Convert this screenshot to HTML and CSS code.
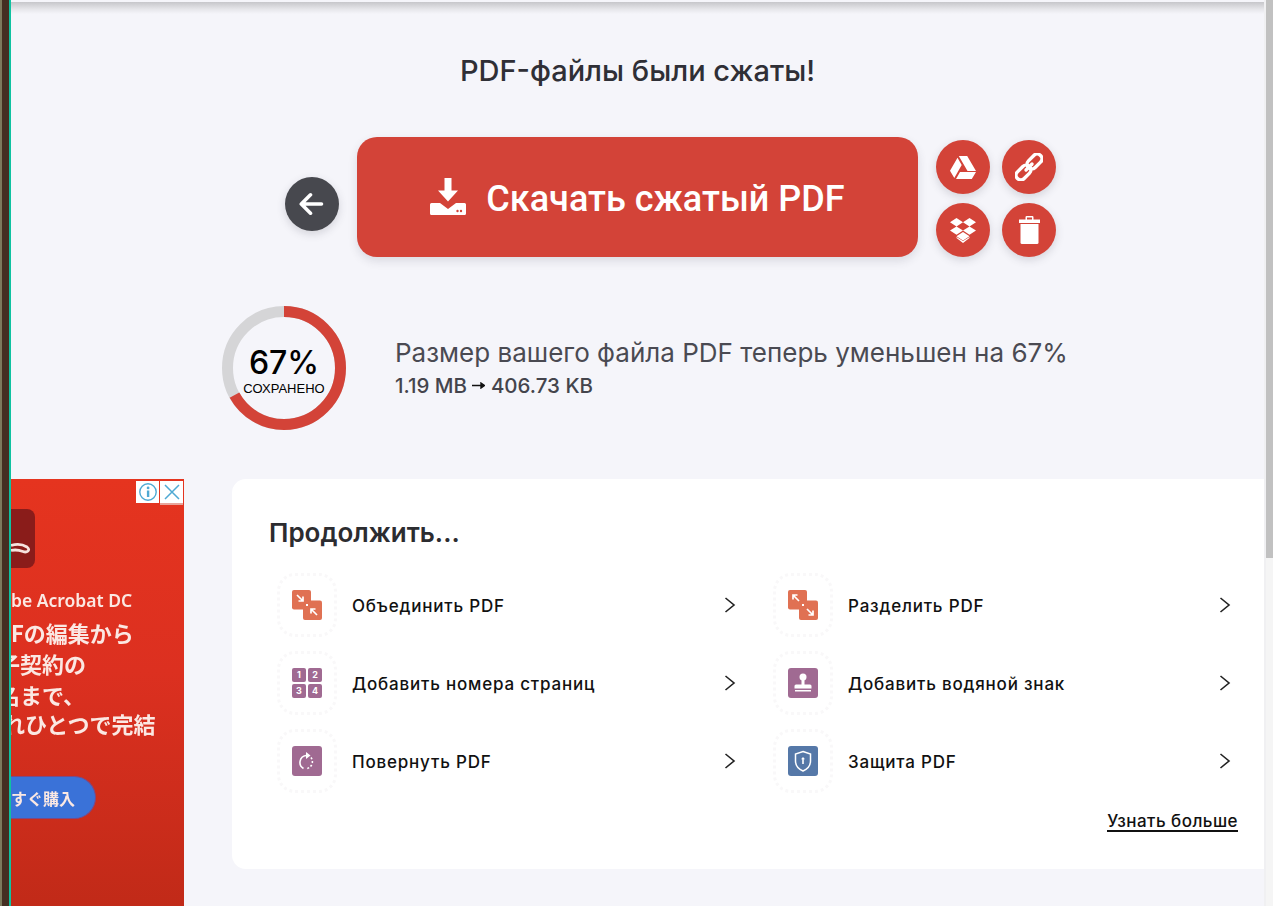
FILE: index.html
```html
<!DOCTYPE html>
<html lang="ru">
<head>
    <meta charset="UTF-8">
    <title>PDF-файлы были сжаты!</title>
    <link rel="stylesheet" href="styles.css">
</head>
<body>
    <div class="edge"><div class="edge-olive"></div><div class="edge-brown"></div><div class="edge-teal"></div></div>

    <div class="page">
        <div class="top-shadow"></div>
        <h1 class="title">PDF-файлы были сжаты!</h1>

        <div class="actions">
            <a class="round round-dark back-btn" href="#back">
                <svg width="26" height="26" viewBox="1 0 26 26"><path d="M23.5 13H3.5M12.5 3.8L3.3 13l9.2 9.2" fill="none" stroke="#fff" stroke-width="3.6" stroke-linecap="round" stroke-linejoin="round"/></svg>
            </a>
            <a class="download-btn" href="#download">
                <svg width="36" height="37" viewBox="0 0 36 37"><path d="M14.5 0h7v12.500h6.500L18 23.500 8 12.500h6.500z" fill="#fff"/><path d="M1.500 25h8.500l8 6 8-6h8.500q1.500 0 1.500 1.500v9q0 1.500-1.500 1.500h-33q-1.500 0-1.500-1.500v-9q0-1.500 1.500-1.500z" fill="#fff"/><circle cx="27.500" cy="33" r="1.200" fill="#d34338"/><circle cx="31" cy="33" r="1.200" fill="#d34338"/></svg>
                <span class="download-label">Скачать сжатый PDF</span>
            </a>
            <div class="round-grid">
                <a class="round" href="#drive">
                    <svg width="26" height="23" viewBox="0 0 26 23"><path d="M8.800 0h8.400l8.800 15h-8.500zM7.500 1.800l4.200 7.300L4.300 22 0 14.800zM10 16h16l-4.200 7H6z" fill="#fff"/></svg>
                </a>
                <a class="round" href="#link">
                    <svg width="28" height="28" viewBox="0 0 28 28"><g fill="none" stroke="#fff" stroke-width="3.400"><rect x="11" y="3.750" width="17" height="9.500" rx="4.700" transform="rotate(-45 19.500 8.500)"/><rect x="0" y="14.750" width="17" height="9.500" rx="4.700" transform="rotate(-45 8.500 19.500)"/><path d="M11 17l6-6" stroke-linecap="round"/></g></svg>
                </a>
                <a class="round" href="#dropbox">
                    <svg width="28" height="25" viewBox="0 0 26 25"><path d="M6.500 0L13 4.200 6.500 8.400 0 4.200zM19.500 0L26 4.200l-6.500 4.200L13 4.200zM0 12.600l6.500-4.200 6.500 4.200-6.500 4.200zM19.500 8.400l6.500 4.200-6.500 4.200-6.500-4.200zM6.500 18.200L13 14l6.500 4.200-6.500 4.200z" fill="#fff"/><path d="M6.500 20l6.500 5 6.500-5v-1l-6.500 4-6.500-4z" fill="#fff"/></svg>
                </a>
                <a class="round" href="#delete">
                    <svg width="21" height="28" viewBox="0 0 21 28"><path d="M0 3.500h6.500V1.200Q6.500 0 7.700 0h5.600q1.200 0 1.200 1.200v2.300H21V7H0zM8 3.500h5V1.500H8z" fill="#fff" fill-rule="evenodd"/><path d="M1.500 8h18v18.500q0 1.500-1.500 1.500H3q-1.500 0-1.500-1.500z" fill="#fff"/></svg>
                </a>
            </div>
        </div>

        <div class="result">
            <div class="ring">
                <svg width="124" height="124" viewBox="0 0 124 124">
                    <circle cx="62" cy="62" r="56.500" fill="none" stroke="#d5d5d7" stroke-width="11"/>
                    <circle cx="62" cy="62" r="56.500" fill="none" stroke="#d34338" stroke-width="11" pathLength="100" stroke-dasharray="67 100" transform="rotate(-90 62 62)"/>
                </svg>
                <div class="ring-label">
                    <div class="ring-percent">67%</div>
                    <div class="ring-saved">СОХРАНЕНО</div>
                </div>
            </div>
            <div class="result-text">
                <div class="result-main">Размер вашего файла PDF теперь уменьшен на 67%</div>
                <div class="result-size">1.19 MB
                    <svg class="size-arrow" width="13" height="7" viewBox="0 0 13 7"><path d="M0 3.500h10M9 1l3.500 2.500L9 6z" stroke="#111" stroke-width="1.400" fill="#111"/></svg>
                    406.73 KB</div>
            </div>
        </div>

        <div class="bottom">
            <aside class="ad">
                <div class="ad-close">
                    <span class="ad-box">
                        <svg width="20" height="20" viewBox="0 0 20 20"><circle cx="10" cy="10" r="8.200" fill="none" stroke="#4fa9d3" stroke-width="1.400"/><rect x="8.900" y="8.500" width="2.400" height="6.500" fill="#4fa9d3"/><circle cx="10.100" cy="5.900" r="1.400" fill="#4fa9d3"/></svg>
                    </span>
                    <span class="ad-box ad-box-close">
                        <svg width="18" height="18" viewBox="0 0 18 18"><path d="M2 2l14 14M16 2L2 16" stroke="#4fa9d3" stroke-width="1.500" fill="none"/></svg>
                    </span>
                </div>
                <div class="ad-logo">
                    <svg width="20" height="12" viewBox="0 0 20 12"><path d="M0 3.500C6 1.500 12 2.500 16 5 20 8 16 11 12 9.500 8 8 4 7.500 0 8.500" fill="none" stroke="#f6e3df" stroke-width="2.800"/></svg>
                </div>
                <div class="ad-text">
                    <div class="ad-brand">be Acrobat DC</div>
                    <div class="ad-line ad-line-one">Fの編集から</div>
                    <div class="ad-line ad-line-two">子契約の</div>
                    <div class="ad-line ad-line-three">名まで、</div>
                    <div class="ad-line ad-line-four">れひとつで完結</div>
                </div>
                <div class="ad-buy"><span>すぐ購入</span></div>
            </aside>

            <section class="next-card">
                <h2 class="next-title">Продолжить...</h2>
                <div class="next-grid">
                    <a class="next-item" href="#merge">
                        <span class="tool-frame">
                            <svg width="30" height="30" viewBox="0 0 30 30"><rect width="19" height="19.500" rx="2" fill="#e07153"/><rect x="11" y="10.500" width="19" height="19.500" rx="2" fill="#e07153"/><path d="M5 5l6 6M11 6.500V11H6.500M25 25l-6-6M19 23.500V19h4.500" fill="none" stroke="#fff" stroke-width="1.700"/><rect x="14" y="14" width="2" height="2" fill="#fff"/></svg>
                        </span>
                        <span class="tool-name">Объединить PDF</span>
                        <svg class="chev" width="12" height="18" viewBox="0 0 12 18"><path d="M1.500 2l8.500 7-8.500 7" fill="none" stroke="#222" stroke-width="1.600"/></svg>
                    </a>
                    <a class="next-item" href="#split">
                        <span class="tool-frame">
                            <svg width="30" height="30" viewBox="0 0 30 30"><rect width="19" height="19.500" rx="2" fill="#e07153"/><rect x="11" y="10.500" width="19" height="19.500" rx="2" fill="#e07153"/><path d="M11 11L5 5M5 9.500V5h4.500M19 19l6 6M25 20.500V25h-4.500" fill="none" stroke="#fff" stroke-width="1.700"/><rect x="14" y="14" width="2" height="2" fill="#fff"/></svg>
                        </span>
                        <span class="tool-name">Разделить PDF</span>
                        <svg class="chev" width="12" height="18" viewBox="0 0 12 18"><path d="M1.500 2l8.500 7-8.500 7" fill="none" stroke="#222" stroke-width="1.600"/></svg>
                    </a>
                    <a class="next-item" href="#numbers">
                        <span class="tool-frame">
                            <span class="number-grid"><b>1</b><b>2</b><b>3</b><b>4</b></span>
                        </span>
                        <span class="tool-name">Добавить номера страниц</span>
                        <svg class="chev" width="12" height="18" viewBox="0 0 12 18"><path d="M1.500 2l8.500 7-8.500 7" fill="none" stroke="#222" stroke-width="1.600"/></svg>
                    </a>
                    <a class="next-item" href="#watermark">
                        <span class="tool-frame">
                            <svg width="30" height="30" viewBox="0 0 30 30"><rect width="30" height="30" rx="3" fill="#a06a92"/><circle cx="15" cy="9" r="3.500" fill="#fff"/><path d="M13.500 11h3v5.500H22q1.500 0 1.500 1.500v2.500h-17V18q0-1.500 1.500-1.500h5.500z" fill="#fff"/><rect x="7" y="22" width="16" height="1.500" fill="#fff"/></svg>
                        </span>
                        <span class="tool-name">Добавить водяной знак</span>
                        <svg class="chev" width="12" height="18" viewBox="0 0 12 18"><path d="M1.500 2l8.500 7-8.500 7" fill="none" stroke="#222" stroke-width="1.600"/></svg>
                    </a>
                    <a class="next-item" href="#rotate">
                        <span class="tool-frame">
                            <svg width="30" height="30" viewBox="0 0 30 30"><rect width="30" height="30" rx="3" fill="#a06a92"/><path d="M14 9.500a7 7 0 0 0-2.500 13" fill="none" stroke="#fff" stroke-width="1.600"/><path d="M14 6l4.500 3.500L14 13z" fill="#fff"/><path d="M19 11.500a7 7 0 0 1-4 11" fill="none" stroke="#fff" stroke-width="1.600" stroke-dasharray="2 1.800"/></svg>
                        </span>
                        <span class="tool-name">Повернуть PDF</span>
                        <svg class="chev" width="12" height="18" viewBox="0 0 12 18"><path d="M1.500 2l8.500 7-8.500 7" fill="none" stroke="#222" stroke-width="1.600"/></svg>
                    </a>
                    <a class="next-item" href="#protect">
                        <span class="tool-frame">
                            <svg width="30" height="30" viewBox="0 0 30 30"><rect width="30" height="30" rx="3" fill="#5578a8"/><path d="M15 5.500l7.500 2.500v7c0 4.800-3 8-7.500 10-4.500-2-7.500-5.200-7.500-10V8z" fill="none" stroke="#fff" stroke-width="1.500"/><path d="M15 11l2 2.200h-1.200V18h-1.600v-4.800H13z" fill="#fff"/></svg>
                        </span>
                        <span class="tool-name">Защита PDF</span>
                        <svg class="chev" width="12" height="18" viewBox="0 0 12 18"><path d="M1.500 2l8.500 7-8.500 7" fill="none" stroke="#222" stroke-width="1.600"/></svg>
                    </a>
                </div>
                <div class="more-row"><a class="more-link" href="#more">Узнать больше</a></div>
            </section>
        </div>
    </div>

    <div class="scrollbar"><div class="scroll-thumb"></div></div>
</body>
</html>
```

FILE: styles.css
```css
* {
    margin: 0;
    padding: 0;
    box-sizing: border-box;
}

html, body {
    height: 906px;
    overflow: hidden;
}

body {
    display: flex;
    background: #f5f5fa;
    color: #2f2f33;
    font-family: Inter, "Noto Sans", sans-serif;
}

a {
    color: inherit;
    text-decoration: none;
}

.edge {
    display: flex;
    flex: 0 0 11px;
}

.edge-olive {
    width: 2px;
    background: #7d7a5c;
}

.edge-brown {
    width: 7px;
    background: #452f22;
}

.edge-teal {
    width: 2px;
    background: #0fc2a0;
}

.page {
    flex: 1;
    min-width: 0;
}

.scrollbar {
    flex: 0 0 9px;
    padding-left: 2px;
    background: linear-gradient(90deg, #f0f0f2 0 2px, #f5f5f5 2px);
}

.scroll-thumb {
    height: 558px;
    background: #c1c1c1;
}

.top-shadow {
    height: 12px;
    margin-top: 2px;
    background: linear-gradient(180deg, #c6c6ca, #e6e6ea 60%, #f5f5fa);
}

.title {
    margin-top: 39px;
    text-align: center;
    font-size: 29px;
    line-height: 36px;
    font-weight: 500;
    color: #2f2f36;
}

.actions {
    display: flex;
    align-items: center;
    margin: 48px 0 0 274px;
}

.round {
    display: flex;
    align-items: center;
    justify-content: center;
    width: 54px;
    height: 54px;
    border-radius: 50%;
    background: #d34338;
    box-shadow: 0 3px 8px rgba(60, 60, 80, 0.18);
}

.round-dark {
    background: #47484e;
}

.back-btn {
    margin: 14px 18px 0 0;
}

.download-btn {
    display: flex;
    align-items: center;
    justify-content: center;
    gap: 20px;
    width: 561px;
    height: 120px;
    border-radius: 20px;
    background: #d34338;
    color: #fff;
    font-family: Roboto, sans-serif;
    font-size: 36px;
    font-weight: 500;
    box-shadow: 0 4px 10px rgba(60, 60, 80, 0.14);
}

.download-btn svg {
    margin-bottom: 2px;
}

.download-label {
    margin-top: 4px;
}

.round-grid {
    display: grid;
    grid-template-columns: 54px 54px;
    column-gap: 12px;
    row-gap: 9px;
    margin-left: 18px;
    padding-top: 3px;
}

.result {
    display: flex;
    align-items: center;
    margin: 49px 0 0 211px;
}

.ring {
    position: relative;
    width: 124px;
    height: 124px;
}

.ring-label {
    position: absolute;
    inset: 0;
    text-align: center;
    color: #000;
}

.ring-percent {
    margin-top: 39px;
    font-size: 32px;
    font-weight: 500;
    line-height: 36px;
}

.ring-saved {
    font-family: "Liberation Sans", sans-serif;
    font-size: 13px;
    line-height: 15px;
}

.result-text {
    margin-left: 49px;
    padding-bottom: 1px;
}

.result-main {
    font-size: 26px;
    line-height: 32px;
    color: #4a4a52;
}

.result-size {
    margin-top: 4px;
    font-size: 20.500px;
    line-height: 26px;
    font-weight: 500;
    color: #44444c;
}

.size-arrow {
    vertical-align: 4px;
}

.bottom {
    display: flex;
    align-items: flex-start;
    margin-top: 49px;
}

.ad {
    position: relative;
    flex: 0 0 173px;
    height: 427px;
    overflow: hidden;
    background: linear-gradient(180deg, #e5341f, #dc3020 45%, #c12a18);
    color: #fbe8e3;
    font-family: "Noto Sans CJK JP", sans-serif;
}

.ad-close {
    position: absolute;
    top: 2px;
    right: 1px;
    display: flex;
    gap: 1px;
}

.ad-box {
    display: flex;
    align-items: center;
    justify-content: center;
    width: 23px;
    height: 22px;
    background: #fff;
}

.ad-box-close {
    box-shadow: 0 2px 0 #e8a59b;
}

.ad-logo {
    display: flex;
    align-items: flex-start;
    width: 24px;
    height: 59px;
    margin-top: 30px;
    padding-top: 33px;
    border-radius: 0 8px 8px 0;
    background: #8a1c1a;
}

.ad-text {
    margin-top: 20px;
    filter: blur(0.5px);
    font-weight: 700;
    white-space: nowrap;
}

.ad-brand {
    font-family: "Noto Sans", sans-serif;
    font-size: 17.500px;
    font-weight: 600;
    line-height: 24px;
}

.ad-line {
    font-size: 22px;
    line-height: 29px;
}

.ad-line-one {
    margin-top: 6px;
}

.ad-line-two {
    margin: 2px 0 0 -13px;
}

.ad-line-three {
    margin: 2px 0 0 -13px;
}

.ad-line-four {
    margin-left: -8px;
}

.ad-buy {
    display: flex;
    align-items: center;
    width: 85px;
    height: 43px;
    margin-top: 38px;
    border-radius: 0 22px 22px 0;
    background: #3a72d8;
    border: 1px solid #7a4a88;
    border-left: 0;
    font-size: 16px;
    font-weight: 700;
    white-space: nowrap;
}

.ad-buy span {
    filter: blur(0.3px);
}

.next-card {
    flex: 1;
    height: 390px;
    margin-left: 48px;
    padding: 37px 0 0 37px;
    border-radius: 14px 0 0 14px;
    background: #fff;
}

.next-title {
    font-size: 26px;
    line-height: 34px;
    font-weight: 600;
    color: #2c2c30;
}

.next-grid {
    display: grid;
    grid-template-columns: 458px 457px;
    column-gap: 38px;
    grid-auto-rows: 78px;
    margin: 16px 0 0 9px;
}

.next-item {
    display: flex;
    align-items: center;
    color: #111;
}

.tool-frame {
    display: flex;
    align-items: center;
    justify-content: center;
    flex: none;
    width: 60px;
    height: 64px;
    margin: 0 -1px;
    border: 3px dotted #f9f8f9;
    border-radius: 18px;
}

.tool-name {
    flex: 1;
    margin-left: 16px;
    padding-top: 2px;
    font-size: 17px;
    font-weight: 500;
    letter-spacing: 0.8px;
}

.chev {
    flex: none;
}

.number-grid {
    display: grid;
    grid-template-columns: 14px 14px;
    gap: 2px;
}

.number-grid b {
    height: 14px;
    border-radius: 2px;
    background: #a06a92;
    color: #fff;
    font-size: 9px;
    line-height: 14px;
    text-align: center;
}

.more-row {
    display: flex;
    justify-content: flex-end;
    padding: 12px 26px 0 0;
}

.more-link {
    font-size: 17px;
    line-height: 18px;
    font-weight: 500;
    letter-spacing: 0.45px;
    color: #111;
    border-bottom: 2px solid #111;
}
```
